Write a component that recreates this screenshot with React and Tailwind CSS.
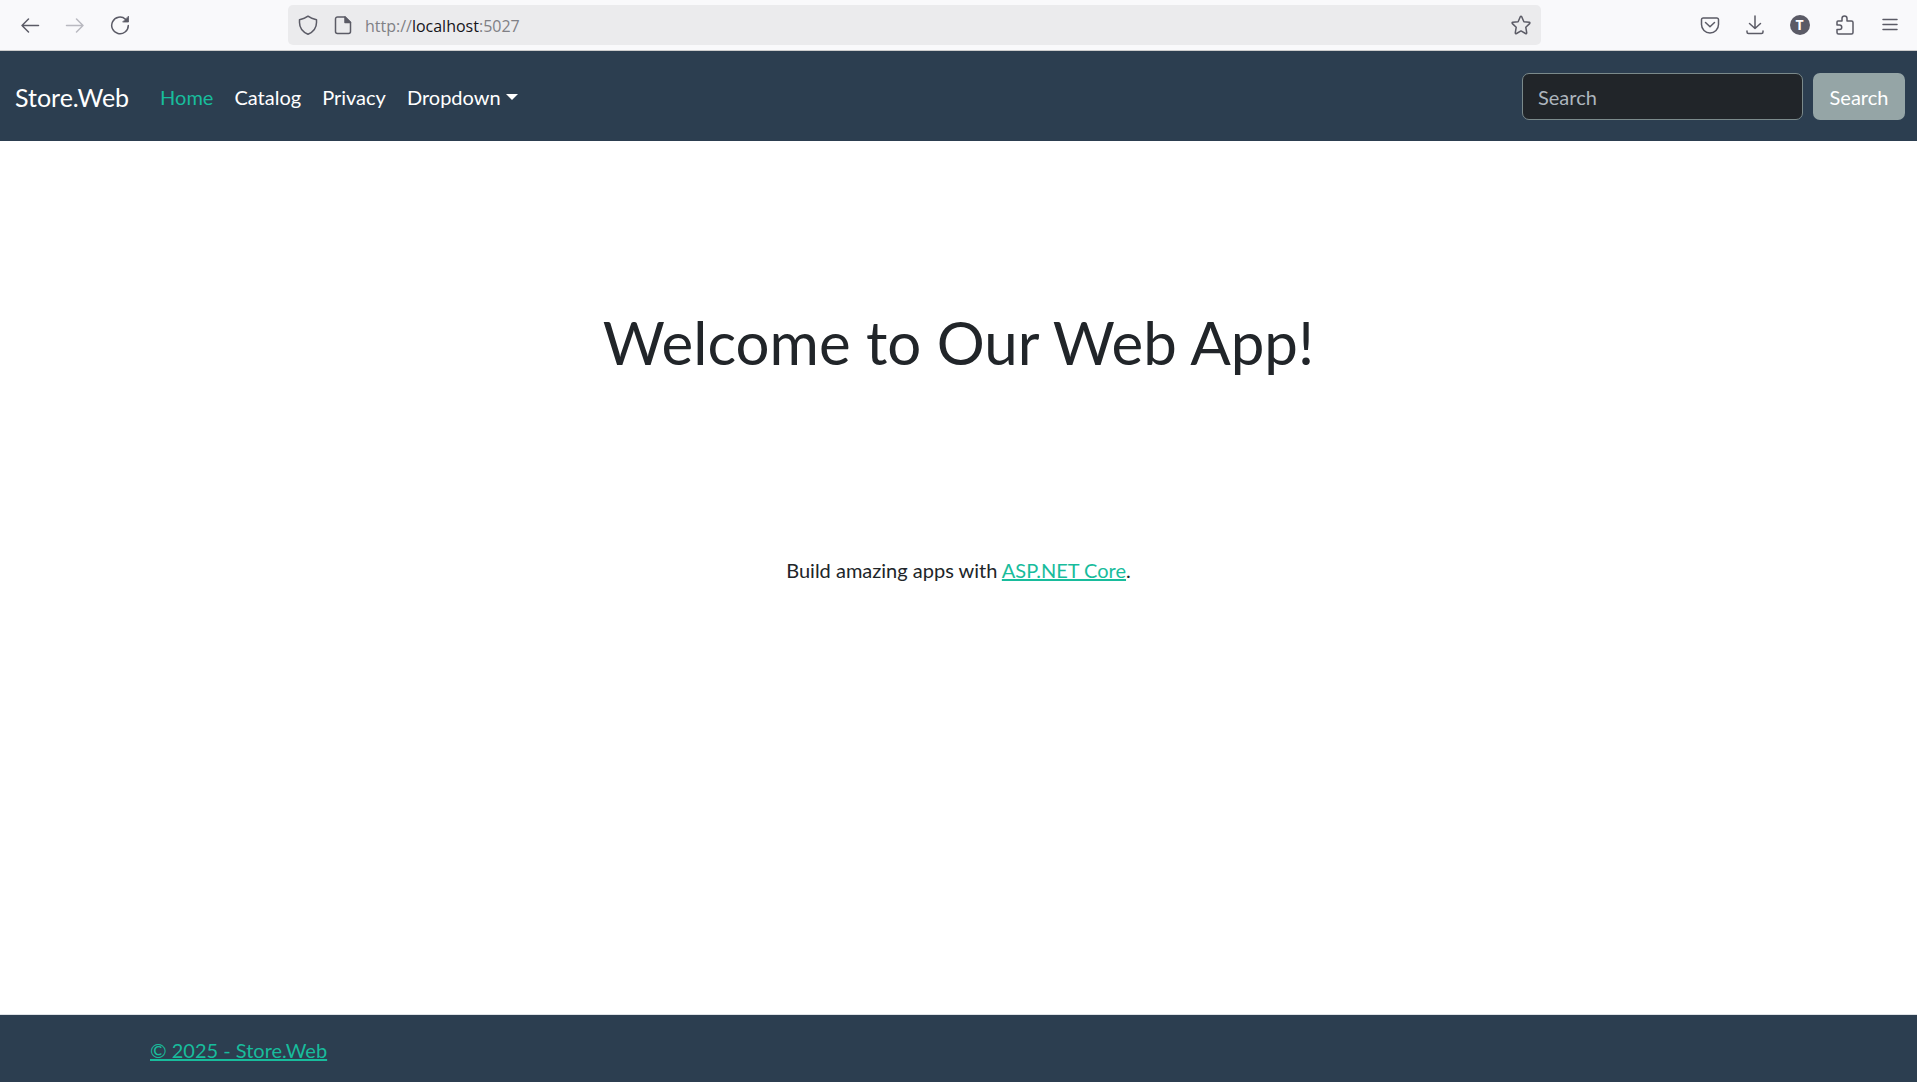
function Icon({ children, className = "text-[#5b5b66]" }) {
  return (
    <svg viewBox="0 0 20 20" className={`size-5 ${className}`} fill="none" stroke="currentColor" strokeWidth="1.5" strokeLinecap="round" strokeLinejoin="round" aria-hidden="true">
      {children}
    </svg>
  );
}

function ToolButton({ label, disabled, children }) {
  return (
    <button type="button" aria-label={label} disabled={disabled} className="flex h-10 w-[45px] shrink-0 items-center justify-center">
      {children}
    </button>
  );
}

function BrowserBar() {
  return (
    <div className="flex items-center border-b border-[#cccccc] bg-[#f9f9fb] py-[5px] pr-[5px] pl-[7px] font-['Open_Sans',sans-serif]">
      <ToolButton label="Back">
        <Icon><path d="M18.5 10.5H2M8.5 4 2 10.5 8.5 17" /></Icon>
      </ToolButton>
      <ToolButton label="Forward" disabled>
        <Icon className="text-[#b9b9c0]"><path d="M1.5 10.5H18M11.5 4 18 10.5 11.5 17" /></Icon>
      </ToolButton>
      <ToolButton label="Reload">
        <Icon>
          <path d="M18.3 10.5A8.3 8.3 0 1 1 15.5 4.2" />
          <path d="M18.5 1.5V7H13Z" fill="currentColor" strokeWidth="0.8" />
        </Icon>
      </ToolButton>
      <div className="flex-1" />
      <div className="flex h-10 grow-[8.45] basis-0 items-center rounded-[5px] bg-[#ebebed] px-[10px]">
        <Icon><path d="M10 1.2C7.5 3.1 4.5 4.100 1.5 4.800V7.500C1.500 13 4.800 17 10 19.300C15.200 17 18.500 13 18.500 7.500V4.800C15.500 4.100 12.500 3.100 10 1.200Z" /></Icon>
        <span className="ml-[15px] flex">
          <Icon>
            <path d="M4.500 2H12L17.500 7.500V16.500A2 2 0 0 1 15.500 18.500H4.500A2 2 0 0 1 2.500 16.500V4A2 2 0 0 1 4.500 2Z" />
            <path d="M12 2V7.500H17.500Z" fill="currentColor" />
          </Icon>
        </span>
        <div role="textbox" aria-label="Address" contentEditable suppressContentEditableWarning className="ml-[12px] flex-1 pt-[2px] text-left text-[16px] text-[#808085] outline-none">
          http://<span className="text-[#15141a]">localhost</span>:5027
        </div>
        <button type="button" aria-label="Bookmark this page">
          <Icon><path d="M9.300 1.700Q10 .6 10.700 1.700L12.900 6.700 18.200 7.300Q19.400 7.600 18.600 8.600L14.800 12.300 15.700 17.700Q15.700 19 14.500 18.500L10 15.900 5.500 18.500Q4.300 19 4.300 17.700L5.200 12.300 1.400 8.600Q.6 7.600 1.800 7.300L7.100 6.700Z" /></Icon>
        </button>
      </div>
      <div className="flex-1" />
      <ToolButton label="Save to Pocket">
        <Icon>
          <path d="M3 3H17A1.600 1.600 0 0 1 18.500 4.600V9.500A8.500 8.500 0 0 1 1.500 9.500V4.600A1.600 1.600 0 0 1 3 3Z" />
          <path d="M5.500 7.500 10 11.700 14.500 7.500" />
        </Icon>
      </ToolButton>
      <ToolButton label="Downloads">
        <Icon><path d="M10 1V13.500M4.500 8.500 10 13.500 15.500 8.500M2 16V17A1.500 1.500 0 0 0 3.500 18.500H16.500A1.500 1.500 0 0 0 18 17V16" /></Icon>
      </ToolButton>
      <ToolButton label="Account">
        <span className="flex size-5 items-center justify-center rounded-full bg-[#5b5b66] text-[14px] font-bold text-white">T</span>
      </ToolButton>
      <ToolButton label="Extensions">
        <Icon><path d="M3 6H7V3.500A2.500 2.500 0 0 1 12 3.500V6H16.500A1.500 1.500 0 0 1 18 7.500V17.500A1.500 1.500 0 0 1 16.500 19H3.500A1.500 1.500 0 0 1 2 17.500V14.500H4.500A2 2 0 0 0 4.500 10H2V7A1 1 0 0 1 3 6Z" /></Icon>
      </ToolButton>
      <ToolButton label="Menu">
        <Icon><path d="M3 4.500H17M3 9.500H17M3 14.500H17" /></Icon>
      </ToolButton>
    </div>
  );
}

export default function App() {
  return (
    <div className="flex min-h-screen flex-col bg-white font-[Lato,sans-serif] text-[20px] leading-[30px] text-[#212529]">
      <BrowserBar />
      <nav className="flex items-center bg-[#2c3e50] px-[15px] pt-[22px] pb-[21px] text-white">
        <a href="#home" className="mr-[21px] text-[25px]">Store.Web</a>
        <div className="flex flex-1 items-center gap-px">
          <a href="#home" className="px-[10px] text-[#18bc9c]">Home</a>
          <a href="#catalog" className="px-[10px]">Catalog</a>
          <a href="#privacy" className="px-[10px]">Privacy</a>
          <button type="button" className="flex items-center gap-[5px] px-[10px]">
            Dropdown
            <span className="border-x-[6px] border-t-[6px] border-x-transparent border-t-white" />
          </button>
        </div>
        <form className="-mr-[3px] flex gap-[10px]">
          <input type="search" aria-label="Search" placeholder="Search" className="h-[47px] w-[281px] rounded-[7px] border border-[#7b8a8b] bg-[#212529] px-[15px] placeholder:text-[#adb5bd]" />
          <button type="button" className="h-[47px] min-w-[92px] rounded-[7px] bg-[#95a5a6] px-[15px]">Search</button>
        </form>
      </nav>
      <main className="flex-1 text-center">
        <h1 className="mt-[165px] text-[60px] leading-[72px]">Welcome to Our Web App!</h1>
        <p className="mt-[177px]">
          Build amazing apps with <a href="#aspnet" className="text-[#18bc9c] underline">ASP.NET Core</a>.
        </p>
      </main>
      <footer className="border-t border-[#dee2e6] bg-[#2c3e50] pt-5 pb-[17px] pl-[150px]">
        <a href="#home" className="text-[#18bc9c] underline">© 2025 - Store.Web</a>
      </footer>
    </div>
  );
}
